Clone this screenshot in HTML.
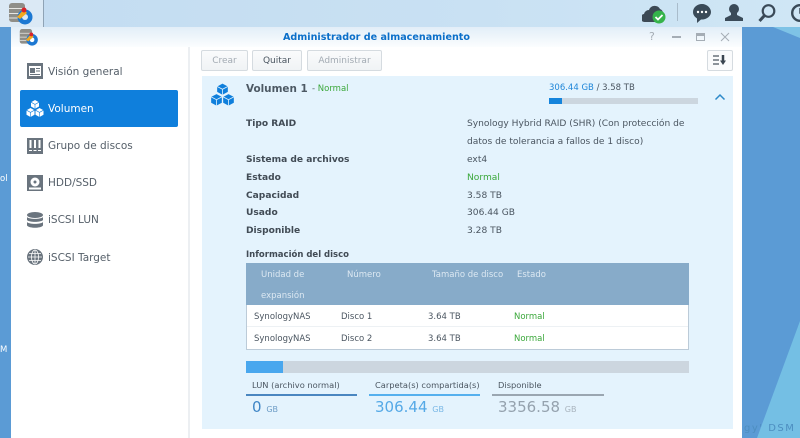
<!DOCTYPE html>
<html><head><meta charset="utf-8">
<style>
*{box-sizing:border-box}
html,body{margin:0;padding:0;width:800px;height:438px;overflow:hidden;background:#5b9bd5}
body{position:relative;font-family:"DejaVu Sans","Liberation Sans",sans-serif;color:#4a5560}
.t{position:absolute;white-space:nowrap;line-height:18px;font-size:9.100px}
.b{font-weight:bold;color:#414b55}
.nav{font-size:10.500px;color:#555f69;letter-spacing:0}
.a{position:absolute}
.btn{position:absolute;top:50px;height:21px;border:1px solid #d5dbe0;border-radius:2px;background:linear-gradient(#fafbfc,#f0f3f5);font-size:9px;line-height:21px;text-align:center;color:#a3abb3}
.th{color:#dce8f2;font-size:8.500px}
.td{color:#4a5560;font-size:8.500px}
.g{color:#3ba83b}
.big{font-size:15px;line-height:16px}
.big span{font-size:8px}
</style></head><body>
<!-- desktop bg -->
<div class="a" style="left:742px;top:27px;width:58px;height:411px;background:#5b9bd5"></div>
<svg class="a" style="left:742px;top:27px" width="58" height="411"><polygon points="31,0 58,0 58,11" fill="#7ec3e6"/><polygon points="58,294 58,411 15,411" fill="#74bfe4"/></svg>
<div class="a" style="left:0;top:27px;width:11px;height:411px;background:#5b9bd5"></div>
<div class="t" style="left:0;top:170px;color:#fff;font-size:8.500px">ol</div>
<div class="t" style="left:0;top:341px;color:#fff;font-size:8.500px">M</div>
<div class="t" style="left:744px;top:420px;color:#4d8ec0;font-size:10px;letter-spacing:1.500px">gy' DSM</div>
<!-- taskbar -->
<div class="a" style="left:0;top:0;width:800px;height:27px;background:linear-gradient(90deg,#c3dcf1,#c9e1f3 60%,#cfe6f5)"></div>
<div class="a" style="left:0;top:0;width:44px;height:27px;background:#dbe9f5;border-right:1px solid #8fa3b5"></div>
<!-- taskbar app icon -->
<svg class="a" style="left:8px;top:2px" width="26" height="24" viewBox="0 0 26 24"><rect x="1" y="1" width="16" height="19" rx="3" fill="#8f8e88"/><path d="M1 6.500h16M1 11.500h16M1 16h16" stroke="#e6e6e2" stroke-width="1"/><circle cx="17" cy="15" r="7.500" fill="#1c78d2"/><circle cx="17" cy="15" r="3" fill="#dbe9f5"/><path d="M9 15 L16 7 L19 11 L12 17Z" fill="#f2a81e"/><circle cx="16" cy="8" r="2.500" fill="#d8232a"/></svg>
<!-- tray -->
<svg class="a" style="left:642px;top:2px" width="26" height="24" viewBox="0 0 26 24"><path d="M3 20a4 4 0 0 1-1-8 5 5 0 0 1 5-4 6 6 0 0 1 11-1 5 5 0 0 1 3 5v8z" fill="#3d4a55"/><circle cx="17" cy="15" r="6.500" fill="#35b34a"/><path d="M13.500 15l2.500 2.500 4.500-4.500" stroke="#fff" stroke-width="1.800" fill="none"/></svg>
<div class="a" style="left:677px;top:3px;width:1px;height:18px;background:#a9bccb"></div>
<svg class="a" style="left:692px;top:3px" width="20" height="20" viewBox="0 0 20 20"><path d="M10 1C5 1 1 4.500 1 9c0 3 2 5 4 6.500V20l4-3.500h1c5 0 9-3.500 9-7.500S15 1 10 1z" fill="#3a4a58"/><circle cx="6" cy="9" r="1.200" fill="#fff"/><circle cx="10" cy="9" r="1.200" fill="#fff"/><circle cx="14" cy="9" r="1.200" fill="#fff"/></svg>
<svg class="a" style="left:724px;top:3px" width="20" height="19" viewBox="0 0 20 19"><circle cx="10" cy="6" r="5" fill="#3a4a58"/><path d="M7 9v3l-6 3v3h18v-3l-6-3V9z" fill="#3a4a58"/></svg>
<svg class="a" style="left:757px;top:3px" width="20" height="20" viewBox="0 0 20 20"><circle cx="11.500" cy="8" r="5.800" fill="none" stroke="#3a4a58" stroke-width="2.200"/><path d="M7.500 12.500L2.500 18" stroke="#3a4a58" stroke-width="3"/></svg>
<svg class="a" style="left:790px;top:3px" width="10" height="20" viewBox="0 0 10 20"><circle cx="10" cy="10" r="7.800" fill="none" stroke="#3a4a58" stroke-width="2.400"/><path d="M10 5v5h4" stroke="#3a4a58" fill="none" stroke-width="1.500"/></svg>
<!-- window -->
<div class="a" style="left:11px;top:27px;width:731px;height:411px;background:#fff"></div>
<div class="a" style="left:11px;top:27px;width:731px;height:20px;background:linear-gradient(#e2eef8,#fbfdfe)"></div>
<svg class="a" style="left:19px;top:28px" width="20" height="19" viewBox="0 0 26 24"><rect x="1" y="1" width="16" height="19" rx="3" fill="#8f8e88"/><path d="M1 6.500h16M1 11.500h16M1 16h16" stroke="#e6e6e2" stroke-width="1"/><circle cx="17" cy="15" r="7.500" fill="#1c78d2"/><circle cx="17" cy="15" r="3" fill="#fff"/><path d="M9 15 L16 7 L19 11 L12 17Z" fill="#f2a81e"/><circle cx="16" cy="8" r="2.500" fill="#d8232a"/></svg>
<div class="t" style="left:283px;top:29px;color:#0b6fc9;font-weight:bold;font-size:9.600px">Administrador de almacenamiento</div>
<!-- window controls -->
<div class="t" style="left:649px;top:28px;color:#a5adb5;font-size:11px">?</div>
<div class="a" style="left:672px;top:36px;width:9px;height:2px;background:#a5adb5"></div>
<div class="a" style="left:696px;top:33px;width:9px;height:8px;border:1px solid #a5adb5;border-top:3px solid #a5adb5"></div>
<svg class="a" style="left:720px;top:32px" width="10" height="10"><path d="M1 1L9 9M9 1L1 9" stroke="#a5adb5" stroke-width="1"/></svg>
<!-- sidebar -->
<div class="a" style="left:188px;top:47px;width:2px;height:391px;background:#eceff2"></div>
<div class="a" style="left:20px;top:90px;width:158px;height:37px;background:#0f7fdc;border-radius:2px"></div>
<!-- icons -->
<svg class="a" style="left:27px;top:63px" width="16" height="16"><rect width="16" height="16" fill="#6a747e"/><rect x="2" y="3" width="12" height="10" fill="#fff"/><rect x="3" y="5" width="5" height="5" fill="#6a747e"/><path d="M9 5.500h4M9 8h4M3 11.500h10" stroke="#6a747e"/></svg>
<div class="t nav" style="left:48px;top:63px">Visión general</div>
<svg class="a" style="left:26px;top:100px" width="18" height="18" viewBox="0 0 18 18" fill="#fff"><path d="M9 0l4 2.200v4.300L9 8.700 5 6.500V2.200z"/><path d="M4.500 8L8.500 10.200v4.600L4.500 17 .5 14.800v-4.600z"/><path d="M13.500 8l4 2.200v4.600l-4 2.200-4-2.200v-4.600z"/><path d="M5 2.200L9 4.400l4-2.200M9 4.400v4.300M.5 10.200l4 2.200 4-2.200M4.500 12.400V17M9.500 10.200l4 2.200 4-2.200M13.500 12.400V17" stroke="#0f7fdc" stroke-width=".6" fill="none"/></svg>
<div class="t nav" style="left:48px;top:100px;color:#fff">Volumen</div>
<svg class="a" style="left:27px;top:138px" width="16" height="16"><rect width="16" height="16" fill="#6a747e"/><path d="M3.500 2v8M8 2v8M12.500 2v8" stroke="#fff" stroke-width="2"/><path d="M2 12.500h3M6.500 12.500h3M11 12.500h3" stroke="#fff"/></svg>
<div class="t nav" style="left:48px;top:137px">Grupo de discos</div>
<svg class="a" style="left:27px;top:175px" width="16" height="16"><rect width="16" height="16" fill="#6a747e"/><circle cx="8" cy="7" r="4.500" fill="#fff"/><circle cx="8" cy="7" r="1.500" fill="#6a747e"/><rect x="2" y="12.500" width="12" height="2" fill="#fff"/></svg>
<div class="t nav" style="left:48px;top:174px">HDD/SSD</div>
<svg class="a" style="left:27px;top:212px" width="16" height="17" fill="#6a747e"><ellipse cx="8" cy="3" rx="8" ry="3"/><path d="M0 5c2 2.500 14 2.500 16 0v3c-2 2.500-14 2.500-16 0zM0 10c2 2.500 14 2.500 16 0v3.500c-2 3-14 3-16 0z"/></svg>
<div class="t nav" style="left:48px;top:211px">iSCSI LUN</div>
<svg class="a" style="left:27px;top:249px" width="16" height="16"><circle cx="8" cy="8" r="8" fill="#6a747e"/><g stroke="#fff" stroke-width=".8" fill="none"><ellipse cx="8" cy="8" rx="3.500" ry="7"/><path d="M8 1v14M1 8h14M2 4.500h12M2 11.500h12"/></g></svg>
<div class="t nav" style="left:48px;top:249px">iSCSI Target</div>
<!-- toolbar -->
<div class="btn" style="left:201px;width:47px">Crear</div>
<div class="btn" style="left:252px;width:50px;color:#4a5560">Quitar</div>
<div class="btn" style="left:307px;width:75px">Administrar</div>
<div class="btn" style="left:707px;width:26px;background:#fafbfc"></div>
<svg class="a" style="left:713px;top:55px" width="15" height="11"><path d="M0 1h6M0 5h6M0 9h6" stroke="#4a5560" stroke-width="1.300"/><path d="M10 0v6" stroke="#3a4550" stroke-width="2.500"/><path d="M7 5.500h6L10 10z" fill="#3a4550"/></svg>
<!-- panel -->
<div class="a" style="left:202px;top:76px;width:531px;height:353px;background:#e4f3fd"></div>
<svg class="a" style="left:210px;top:83px" width="25" height="24" viewBox="0 0 18 18" fill="#0f7fdc"><path d="M9 .5l4 2.100v4.100L9 8.800 5 6.700V2.600z"/><path d="M4.500 8.300L8.500 10.400v4.400L4.500 17 .5 14.800v-4.400z"/><path d="M13.500 8.300l4 2.100v4.400l-4 2.200-4-2.200v-4.400z"/><path d="M5 2.600L9 4.700 13 2.600M9 4.700v4M.5 10.400l4 2.100 4-2.100M4.500 12.500V17M9.500 10.400l4 2.100 4-2.100M13.500 12.500V17" stroke="#e4f3fd" stroke-width=".6" fill="none"/></svg>
<div class="t b" style="left:246px;top:80px;font-size:10.400px;color:#4d5964">Volumen 1</div>
<div class="t" style="left:312px;top:80px;font-size:8.500px"><span style="color:#5a6670">- </span><span class="g">Normal</span></div>
<div class="t" style="left:549px;top:79px;font-size:8.500px"><span style="color:#1f86d8">306.44 GB</span> / 3.58 TB</div>
<div class="a" style="left:549px;top:98px;width:149px;height:6px;background:#ccd6df"></div>
<div class="a" style="left:549px;top:98px;width:13px;height:6px;background:#1584dc"></div>
<svg class="a" style="left:714px;top:93px" width="12" height="8"><path d="M1.500 6.500L6 2l4.500 4.500" stroke="#2d89c9" stroke-width="1.500" fill="none"/></svg>
<!-- details -->
<div class="t b" style="left:246px;top:115px">Tipo RAID</div>
<div class="t" style="left:467px;top:115px">Synology Hybrid RAID (SHR) (Con protección de</div>
<div class="t" style="left:467px;top:133px">datos de tolerancia a fallos de 1 disco)</div>
<div class="t b" style="left:246px;top:151px">Sistema de archivos</div><div class="t" style="left:467px;top:151px">ext4</div>
<div class="t b" style="left:246px;top:169px">Estado</div><div class="t g" style="left:467px;top:169px">Normal</div>
<div class="t b" style="left:246px;top:187px">Capacidad</div><div class="t" style="left:467px;top:187px">3.58 TB</div>
<div class="t b" style="left:246px;top:204px">Usado</div><div class="t" style="left:467px;top:204px">306.44 GB</div>
<div class="t b" style="left:246px;top:222px">Disponible</div><div class="t" style="left:467px;top:222px">3.28 TB</div>
<div class="t b" style="left:246px;top:246px;font-size:8.500px">Información del disco</div>
<!-- table -->
<div class="a" style="left:246px;top:263px;width:443px;height:87px;background:#fff;border:1px solid #bccbd8;border-top:0"></div>
<div class="a" style="left:246px;top:263px;width:443px;height:42px;background:#87abc9"></div>
<div class="a" style="left:247px;top:326px;width:441px;height:1px;background:#edf1f4"></div>
<div class="t th" style="left:261px;top:266px">Unidad de</div>
<div class="t th" style="left:261px;top:287px">expansión</div>
<div class="t th" style="left:347px;top:266px">Número</div>
<div class="t th" style="left:432px;top:266px">Tamaño de disco</div>
<div class="t th" style="left:517px;top:266px">Estado</div>
<div class="t td" style="left:254px;top:308px">SynologyNAS</div><div class="t td" style="left:341px;top:308px">Disco 1</div><div class="t td" style="left:428px;top:308px">3.64 TB</div><div class="t td g" style="left:514px;top:308px">Normal</div>
<div class="t td" style="left:254px;top:330px">SynologyNAS</div><div class="t td" style="left:341px;top:330px">Disco 2</div><div class="t td" style="left:428px;top:330px">3.64 TB</div><div class="t td g" style="left:514px;top:330px">Normal</div>
<!-- usage -->
<div class="a" style="left:246px;top:361px;width:443px;height:12px;background:#ccd6df"></div>
<div class="a" style="left:246px;top:361px;width:37px;height:12px;background:#49a7ee"></div>
<div class="t" style="left:252px;top:376px;font-size:8.300px">LUN (archivo normal)</div>
<div class="a" style="left:246px;top:394px;width:111px;height:2px;background:#4a86c0"></div>
<div class="t big" style="left:252px;top:399px;color:#3f86c6">0 <span style="color:#6d9cc6">GB</span></div>
<div class="t" style="left:375px;top:376px;font-size:8.300px">Carpeta(s) compartida(s)</div>
<div class="a" style="left:369px;top:394px;width:111px;height:2px;background:#55b0ee"></div>
<div class="t big" style="left:375px;top:399px;color:#55a9e6">306.44 <span style="color:#7ab8e6">GB</span></div>
<div class="t" style="left:498px;top:376px;font-size:8.300px">Disponible</div>
<div class="a" style="left:492px;top:394px;width:112px;height:2px;background:#9aa6b1"></div>
<div class="t big" style="left:498px;top:399px;color:#95a2ae">3356.58 <span style="color:#a9b4be">GB</span></div>
</body></html>
